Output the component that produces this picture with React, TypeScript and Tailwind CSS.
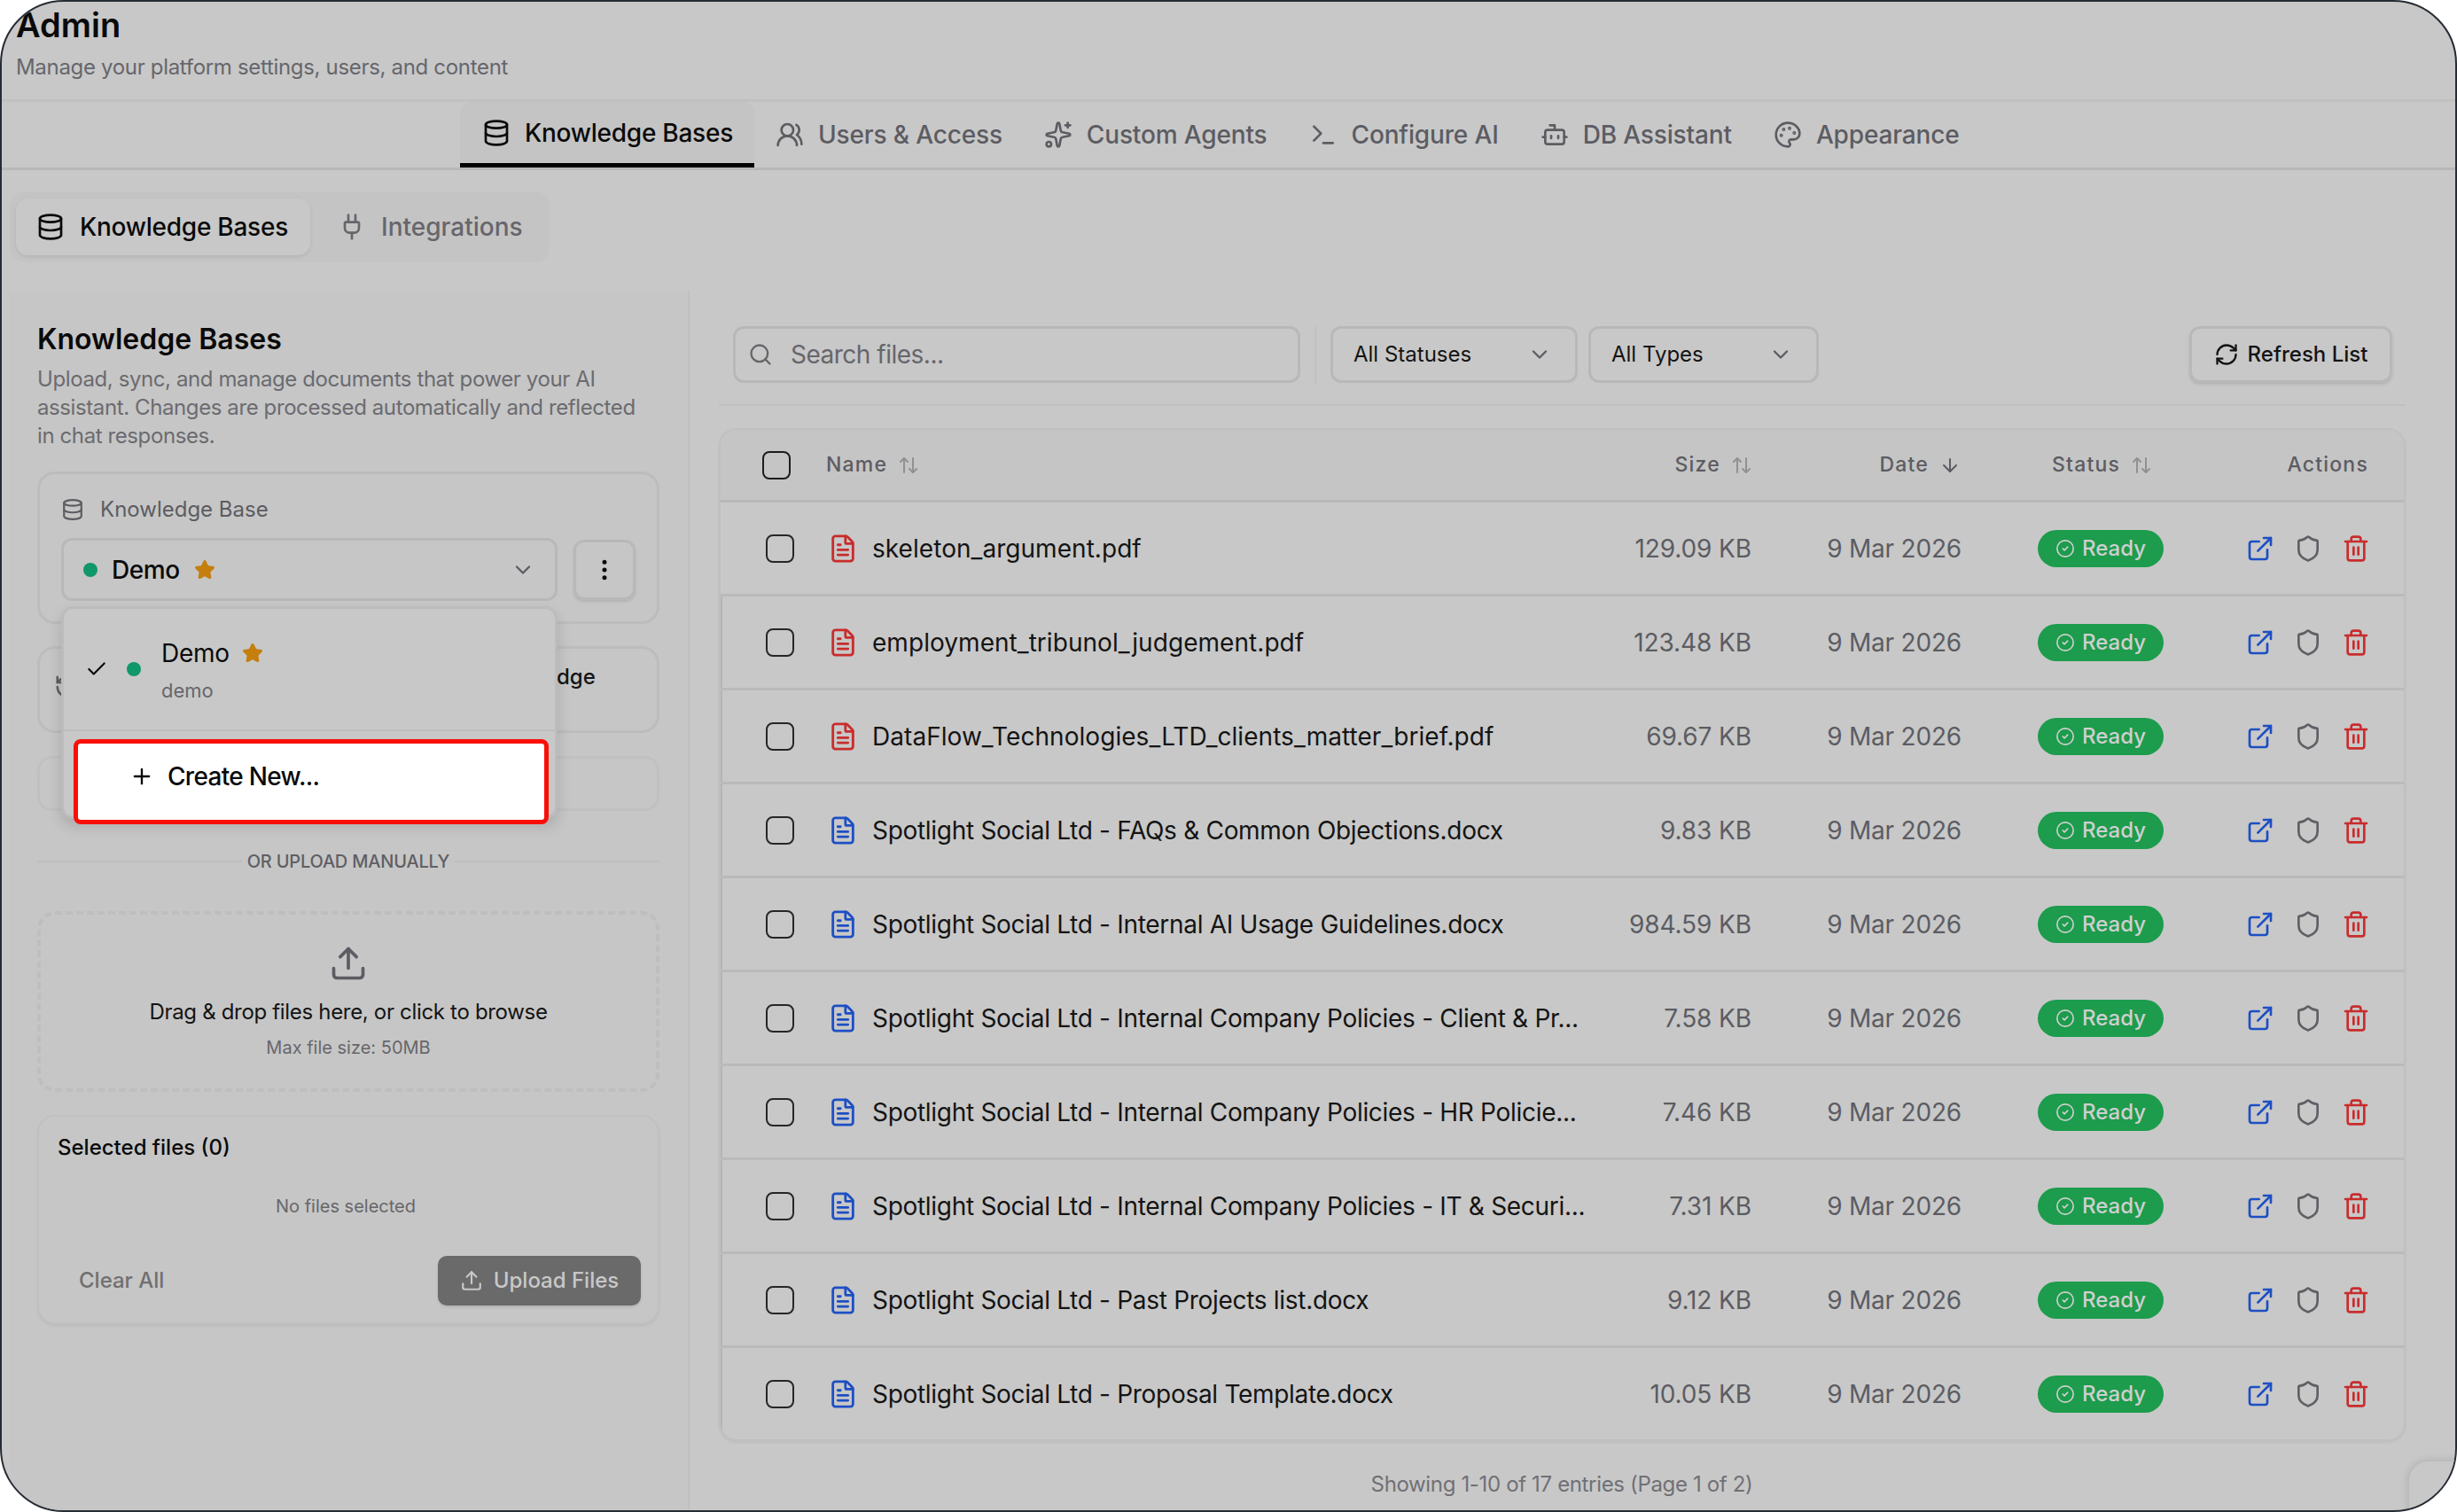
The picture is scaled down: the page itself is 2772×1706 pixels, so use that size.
import { ArrowDown, ArrowUpDown, Bot, Check, ChevronDown, CircleCheck, Database, EllipsisVertical, ExternalLink, FileText, History, Palette, Plug, Plus, RefreshCw, Search, Shield, Sparkles, Star, Terminal, Trash2, Upload, UsersRound } from "lucide-react";

const files = [
  { name: "skeleton_argument.pdf", size: "129.09 KB", pdf: true },
  { name: "employment_tribunol_judgement.pdf", size: "123.48 KB", pdf: true },
  { name: "DataFlow_Technologies_LTD_clients_matter_brief.pdf", size: "69.67 KB", pdf: true },
  { name: "Spotlight Social Ltd - FAQs & Common Objections.docx", size: "9.83 KB", pdf: false },
  { name: "Spotlight Social Ltd - Internal AI Usage Guidelines.docx", size: "984.59 KB", pdf: false },
  { name: "Spotlight Social Ltd - Internal Company Policies - Client & Pr...", size: "7.58 KB", pdf: false },
  { name: "Spotlight Social Ltd - Internal Company Policies - HR Policie...", size: "7.46 KB", pdf: false },
  { name: "Spotlight Social Ltd - Internal Company Policies - IT & Securi...", size: "7.31 KB", pdf: false },
  { name: "Spotlight Social Ltd - Past Projects list.docx", size: "9.12 KB", pdf: false },
  { name: "Spotlight Social Ltd - Proposal Template.docx", size: "10.05 KB", pdf: false },
];

const tabs = [
  { label: "Users & Access", icon: UsersRound },
  { label: "Custom Agents", icon: Sparkles },
  { label: "Configure AI", icon: Terminal },
  { label: "DB Assistant", icon: Bot },
  { label: "Appearance", icon: Palette },
];

const Row = ({ name, size, pdf, first, last }: { name: string; size: string; pdf: boolean; first: boolean; last: boolean }) => {
  return <div className={`flex items-center pl-[51px] pr-[38px] ${last ? "h-[103px]" : "h-[106px] border-b-[3px] border-[#bababa]"} ${first ? "" : "shadow-[inset_2px_0_0_#b4b4b4]"}`}>
    <div className="h-[32px] w-[32px] rounded-[8px] border-2 border-[#26262a]" />
    {pdf
      ? <FileText className="ml-[38px] h-[34px] w-[34px] shrink-0 text-[#c92c2c]" />
      : <FileText className="ml-[38px] h-[34px] w-[34px] shrink-0 text-[#1d4fc4]" />}
    <div className={`ml-[16px] w-[795px] whitespace-nowrap text-[28px] text-[#141414] ${pdf ? "tracking-[0.05px]" : "tracking-[-0.3px]"}`}>{name}</div>
    <div className="w-[197px] text-right text-[28px] tracking-[-0.1px] text-[#5c5c62]">{size}</div>
    <div className="w-[237px] text-right text-[28px] tracking-[-0.2px] text-[#5c5c62]">9 Mar 2026</div>
    <div className="ml-[86px] flex h-[42px] w-[142px] items-center justify-center gap-[8px] rounded-full bg-[#1c9c4c] text-[24px] font-medium text-[#cfcfcf]">
      <CircleCheck className="h-[22px] w-[22px]" strokeWidth={1.8} />
      Ready
    </div>
    <div className="ml-auto flex items-center gap-[22px]">
      <ExternalLink className="h-[32px] w-[32px] text-[#1d4fc4]" />
      <Shield className="h-[32px] w-[32px] text-[#5f5f65]" />
      <Trash2 className="h-[32px] w-[32px] text-[#c92c2c]" />
    </div>
  </div>
}

export default function App() {
  return <div className="h-[1706px] w-[2772px] bg-white font-['Inter',sans-serif]">
    <div className="relative h-full w-full overflow-hidden rounded-[72px] border-2 border-[#262c33] bg-[#c8c8c8]">
      <div className="h-[113px] border-b-[3px] border-[#c0c0c0] pl-[16px]">
        <h1 className="pt-[4px] text-[38px] font-semibold leading-[44px] text-[#0a0a0a]">Admin</h1>
        <p className="mt-[10px] text-[24px] leading-[32px] tracking-[-0.32px] text-[#66666b]">Manage your platform settings, users, and content</p>
      </div>

      <div className="flex h-[77px] items-stretch border-b-[3px] border-[#b8b8b8] pl-[517px]">
        <div className="flex w-[332px] items-center gap-[16px] rounded-t-[12px] border-b-[5px] border-black bg-[#c4c4c4] pl-[25px] text-[28px] font-medium tracking-[-0.25px] text-[#0a0a0a]">
          <Database className="h-[32px] w-[32px]" />
          Knowledge Bases
        </div>
        <div className="ml-[24px] flex items-center gap-[47px]">
          {tabs.map((tab) => {
            const Icon = tab.icon;
            return <div key={tab.label} className="flex items-center gap-[16px] text-[28px] font-medium tracking-[-0.15px] text-[#5c5c62]">
              <Icon className="h-[32px] w-[32px]" />
              {tab.label}
            </div>
          })}
        </div>
      </div>

      <div className="ml-[9px] mt-[24px] flex h-[80px] w-[609px] items-center gap-[31px] rounded-[16px] bg-[#c4c4c4] px-[7px]">
        <div className="flex h-[64px] w-[332px] items-center gap-[17px] rounded-[14px] bg-[#c8c8c8] pl-[23px] text-[28px] font-medium tracking-[-0.25px] text-[#0a0a0a] shadow-[0_2px_4px_rgba(0,0,0,0.08)]">
          <Database className="h-[32px] w-[32px]" />
          Knowledge Bases
        </div>
        <div className="flex items-center gap-[17px] text-[28px] font-medium text-[#66666b]">
          <Plug className="h-[32px] w-[32px]" />
          Integrations
        </div>
      </div>

      <div className="mt-[32px] flex">
        <div className="relative ml-[8px] h-[1376px] w-[768px] shrink-0 border-r-2 border-[#c0c0c0] bg-[#c6c6c6] pl-[32px] pr-[32px] pt-[35px]">
          <h2 className="text-[32px] font-semibold leading-[40px] text-[#0a0a0a]">Knowledge Bases</h2>
          <p className="mt-[9px] w-[680px] text-[24px] leading-[32px] tracking-[-0.4px] text-[#6b6b70]">Upload, sync, and manage documents that power your AI assistant. Changes are processed automatically and reflected in chat responses.</p>

          <div className="mt-[24px] h-[172px] rounded-[20px] border-[3px] border-[#bcbcbc] px-[24px] pt-[24px]">
            <div className="flex items-center gap-[18px] text-[24px] leading-[32px] text-[#5c5c62]">
              <Database className="h-[26px] w-[26px]" />
              Knowledge Base
            </div>
            <div className="mt-[16px] flex items-center gap-[18px]">
              <div className="flex h-[71px] w-[560px] items-center rounded-[12px] border-[3px] border-[#b8b8b8] pl-[22px] pr-[22px] text-[28px] font-medium tracking-[-0.4px] text-[#0a0a0a]">
                <div className="h-[16px] w-[16px] rounded-full bg-[#10976a]" />
                <span className="ml-[16px]">Demo</span>
                <Star className="ml-[16px] h-[24px] w-[24px] fill-[#c57f0e] text-[#c57f0e]" />
                <ChevronDown className="ml-auto h-[28px] w-[28px] text-[#5c5c62]" />
              </div>
              <div className="flex h-[68px] w-[70px] items-center justify-center rounded-[12px] border-[3px] border-[#b8b8b8] shadow-[0_2px_3px_rgba(0,0,0,0.1)]">
                <EllipsisVertical className="h-[30px] w-[30px] text-[#0a0a0a]" />
              </div>
            </div>
          </div>

          <div className="mt-[25px] flex h-[98px] items-start rounded-[20px] border-[3px] border-[#bcbcbc] pl-[16px] pt-[16px]">
            <History className="mt-[12px] h-[30px] w-[30px] text-[#5c5c62]" />
            <span className="ml-[537px] text-[24px] font-medium leading-[32px] text-[#141414]">dge</span>
          </div>

          <div className="mt-[26px] h-[62px] rounded-[16px] border-[3px] border-[#c0c0c0]" />

          <div className="relative mt-[27px] flex h-[60px] items-center justify-center">
            <div className="absolute left-0 right-0 top-[29px] h-[2px] bg-[#bebebe]" />
            <span className="relative bg-[#c6c6c6] px-[6px] text-[20px] font-medium tracking-[-0.2px] text-[#5f5f65]">OR UPLOAD MANUALLY</span>
          </div>

          <div className="mt-[26px] flex h-[204px] flex-col items-center rounded-[20px] border-4 border-dashed border-[#bebebe] pt-[33px]">
            <Upload className="h-[44px] w-[44px] text-[#5c5c62]" />
            <p className="mt-[17px] text-[24px] leading-[32px] tracking-[-0.32px] text-[#141414]">Drag &amp; drop files here, or click to browse</p>
            <p className="mt-[10px] text-[20px] leading-[28px] text-[#66666b]">Max file size: 50MB</p>
          </div>

          <div className="mt-[26px] h-[236px] rounded-[20px] border-2 border-[#c0c0c0] pl-[21px] pr-[19px] pt-[19px] shadow-[0_2px_3px_rgba(0,0,0,0.06)]">
            <div className="text-[24px] font-medium leading-[32px] text-[#0a0a0a]">Selected files (0)</div>
            <div className="mt-[36px] pr-[8px] text-center text-[20px] leading-[28px] text-[#66666b]">No files selected</div>
            <div className="mt-[42px] flex items-center justify-between">
              <span className="ml-[24px] text-[24px] font-medium text-[#707070]">Clear All</span>
              <div className="flex h-[56px] w-[229px] items-center justify-center gap-[12px] rounded-[10px] bg-[#6a6a6a] text-[24px] font-medium text-[#c8c8c8] shadow-[0_2px_3px_rgba(0,0,0,0.1)]">
                <Upload className="h-[26px] w-[26px]" />
                Upload Files
              </div>
            </div>
          </div>

          <div className="absolute left-[59px] top-[356px] w-[560px]">
            <div className="h-[240px] rounded-[14px] border-[3px] border-[#bcbcbc] bg-[#c8c8c8] shadow-[0_8px_16px_rgba(0,0,0,0.14)]">
              <div className="flex h-[138px] items-center border-b-2 border-[#bebebe] pl-[24px]">
                <Check className="h-[26px] w-[26px] text-[#0a0a0a]" />
                <div className="ml-[21px] h-[16px] w-[16px] rounded-full bg-[#10976a]" />
                <div className="ml-[23px]">
                  <div className="flex items-center gap-[14px] text-[28px] leading-[40px] tracking-[-0.3px] text-[#0a0a0a]">
                    Demo
                    <Star className="h-[24px] w-[24px] fill-[#c57f0e] text-[#c57f0e]" />
                  </div>
                  <div className="mt-[8px] text-[22px] leading-[28px] text-[#66666b]">demo</div>
                </div>
              </div>
            </div>
            <div className="absolute left-[14px] top-[150px] flex h-[96px] w-[536px] items-center rounded-[8px] border-[5px] border-[#f90f07] bg-white pb-[12px] pl-[58px] text-[28px] font-medium tracking-[-0.7px] text-[#0a0a0a]">
              <Plus className="h-[28px] w-[28px]" />
              <span className="ml-[15px]">Create New...</span>
            </div>
          </div>
        </div>

        <div className="ml-[33px] w-[1903px] pt-[40px]">
          <div className="flex items-stretch border-b-2 border-[#c0c0c0] pb-[24px] pl-[16px] pr-[15px]">
            <div className="flex h-[64px] w-[640px] items-center rounded-[12px] border-[3px] border-[#b8b8b8] pl-[14px] text-[28px] tracking-[-0.5px] text-[#66666b]">
              <Search className="h-[28px] w-[28px]" />
              <span className="ml-[20px]">Search files...</span>
            </div>
            <div className="ml-[16px] w-[2px] bg-[#c0c0c0]" />
            <div className="ml-[16px] flex h-[64px] w-[279px] items-center justify-between rounded-[12px] border-[3px] border-[#b8b8b8] pl-[23px] pr-[26px] text-[24px] text-[#141414]">
              All Statuses
              <ChevronDown className="h-[28px] w-[28px] text-[#5c5c62]" />
            </div>
            <div className="ml-[12px] flex h-[64px] w-[260px] items-center justify-between rounded-[12px] border-[3px] border-[#b8b8b8] pl-[23px] pr-[26px] text-[24px] text-[#141414]">
              All Types
              <ChevronDown className="h-[28px] w-[28px] text-[#5c5c62]" />
            </div>
            <div className="ml-auto flex h-[64px] w-[229px] items-center justify-center gap-[10px] rounded-[12px] border-[3px] border-[#b8b8b8] text-[24px] font-medium text-[#141414] shadow-[0_2px_3px_rgba(0,0,0,0.1)]">
              <RefreshCw className="h-[28px] w-[28px]" />
              Refresh List
            </div>
          </div>

          <div className="mt-[25px] overflow-hidden rounded-[20px] border-2 border-[#c0c0c0] bg-[#c8c8c8] shadow-[0_2px_3px_rgba(0,0,0,0.05)]">
            <div className="flex h-[82px] items-center border-b-[3px] border-[#b8b8b8] bg-[#c5c5c5] pl-[47px] text-[23px] font-medium tracking-[1.2px] text-[#5c5c62]">
              <div className="h-[32px] w-[32px] rounded-[8px] border-2 border-[#1c1c20]" />
              <div className="ml-[40px] flex w-[250px] items-center gap-[12px]">Name <ArrowUpDown className="h-[24px] w-[24px] text-[#909095]" /></div>
              <div className="ml-[648px] flex w-[147px] items-center justify-end gap-[12px]">Size <ArrowUpDown className="h-[24px] w-[24px] text-[#909095]" /></div>
              <div className="flex w-[235px] items-center justify-end gap-[12px]">Date <ArrowDown className="h-[24px] w-[24px]" /></div>
              <div className="ml-[103px] flex items-center gap-[12px]">Status <ArrowUpDown className="h-[24px] w-[24px] text-[#909095]" /></div>
              <div className="ml-auto pr-[40px]">Actions</div>
            </div>
            {files.map((file, i) => <Row key={file.name} name={file.name} size={file.size} pdf={file.pdf} first={i === 0} last={i === files.length - 1} />)}
          </div>

          <p className="mt-[33px] pr-[1px] text-center text-[24px] leading-[32px] tracking-[-0.35px] text-[#707075]">Showing 1-10 of 17 entries (Page 1 of 2)</p>
        </div>
      </div>

      <div className="absolute bottom-[-20px] right-[-20px] h-[77px] w-[74px] rounded-tl-[24px] border-2 border-[#bcbcbc] bg-[#c8c8c8] shadow-[0_0_8px_rgba(0,0,0,0.1)]" />
    </div>
  </div>
}
